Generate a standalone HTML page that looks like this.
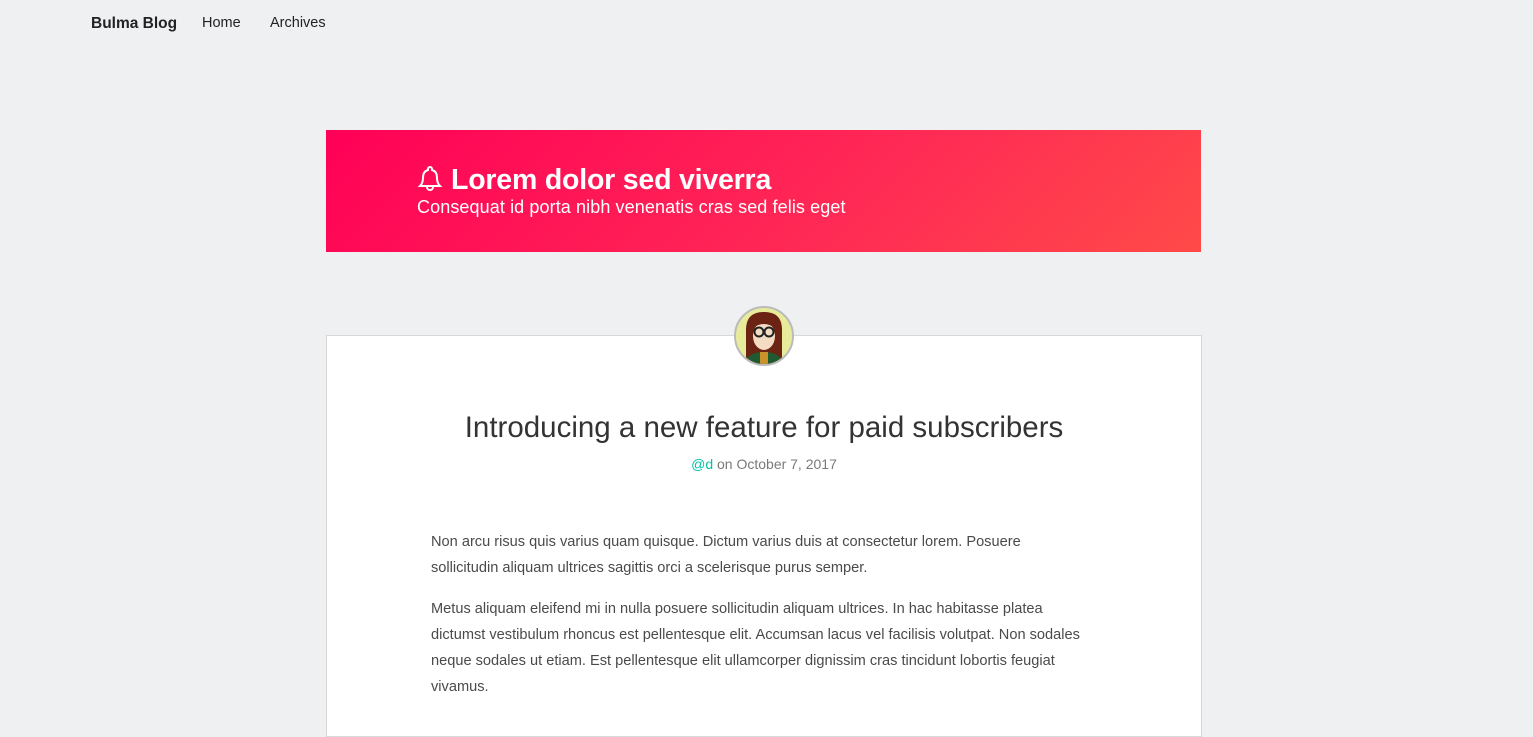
<!DOCTYPE html>
<html><head><style>
body{margin:0;background:#eff0f2;font-family:"Liberation Sans",sans-serif;color:#363636;width:1533px;height:725px;overflow:hidden;position:relative}
.nav{position:absolute;top:15px;left:91px;font-size:15px;color:#222}
.nav span{position:absolute;white-space:nowrap;top:0}
.hero{position:absolute;left:326px;top:130px;width:875px;height:122px;background:linear-gradient(135deg,#ff0057 0%,#ff2a55 60%,#ff4a48 100%);color:#fff}
.hero h1{position:absolute;left:91px;top:34px;margin:0;font-size:28.5px;font-weight:bold;white-space:nowrap;letter-spacing:-0.2px}
.hero p{position:absolute;left:91px;top:67px;margin:0;font-size:18px;white-space:nowrap;letter-spacing:0.1px}
.card{position:absolute;left:326px;top:335px;width:874px;height:400px;background:#fff;border:1px solid #d8d8d8}
.av{position:absolute;left:734px;top:306px;width:56px;height:56px;border-radius:50%;border:2px solid #bbb;background:#e8ec9a;overflow:hidden}
h2{position:absolute;left:326px;width:876px;top:411px;margin:0;text-align:center;font-weight:normal;font-size:29.5px;color:#333}
.meta{position:absolute;left:326px;width:876px;top:456px;text-align:center;font-size:14px;color:#7a7a7a}
.meta b{color:#00c4a7;font-weight:normal}
.txt{position:absolute;left:431px;font-size:14.6px;line-height:26px;color:#4a4a4a;white-space:nowrap}
</style></head><body>
<div class="nav"><span style="left:0;font-weight:bold;font-size:15.5px">Bulma Blog</span><span style="left:111px;font-size:14.5px">Home</span><span style="left:179px;font-size:14.5px">Archives</span></div>
<div class="hero"><h1><svg width="26" height="28" viewBox="0 0 26 28" style="vertical-align:-3px;margin-right:8px"><path d="M13 3a2 2 0 0 0-2 2v1C7 7 6 10 6 14c0 4-1 6-3 8h20c-2-2-3-4-3-8 0-4-1-7-5-8V5a2 2 0 0 0-2-2z" fill="none" stroke="#fff" stroke-width="2"/><path d="M10 23a3 3 0 0 0 6 0" fill="none" stroke="#fff" stroke-width="2"/></svg>Lorem dolor sed viverra</h1><p>Consequat id porta nibh venenatis cras sed felis eget</p></div>
<div class="card"></div>
<div class="av"><svg width="56" height="56" viewBox="0 0 56 56"><path d="M10 56V22C10 8 18 4 28 4s18 4 18 18v34z" fill="#6b2414"/><ellipse cx="28" cy="28" rx="11" ry="14" fill="#f4dcc4"/><path d="M17 20q11-8 22 0v-6H17z" fill="#6b2414"/><circle cx="23" cy="24" r="4.5" fill="none" stroke="#222" stroke-width="2"/><circle cx="33" cy="24" r="4.5" fill="none" stroke="#222" stroke-width="2"/><path d="M8 56q4-12 20-12t20 12z" fill="#1f5a30"/><rect x="24" y="44" width="8" height="12" fill="#c9922a"/></svg></div>
<h2>Introducing a new feature for paid subscribers</h2>
<div class="meta"><b>@d</b> on October 7, 2017</div>
<div class="txt" style="top:529px">Non arcu risus quis varius quam quisque. Dictum varius duis at consectetur lorem. Posuere<br>sollicitudin aliquam ultrices sagittis orci a scelerisque purus semper.</div>
<div class="txt" style="top:596px">Metus aliquam eleifend mi in nulla posuere sollicitudin aliquam ultrices. In hac habitasse platea<br>dictumst vestibulum rhoncus est pellentesque elit. Accumsan lacus vel facilisis volutpat. Non sodales<br>neque sodales ut etiam. Est pellentesque elit ullamcorper dignissim cras tincidunt lobortis feugiat<br>vivamus.</div>
</body></html>
